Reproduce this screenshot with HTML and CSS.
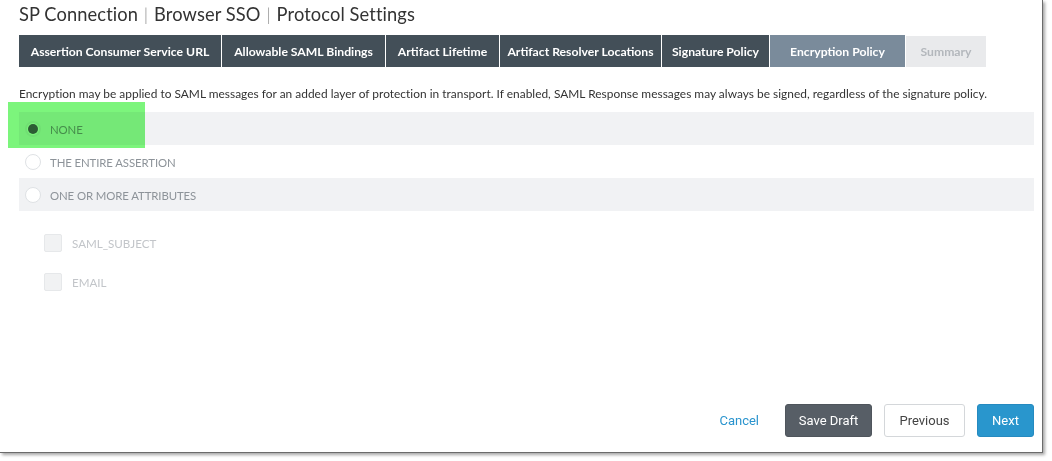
FILE: index.html
```html
<!DOCTYPE html>
<html>
<head>
<meta charset="utf-8">
<link rel="stylesheet" href="styles.css">
</head>
<body>
<div class="frame">
  <h1 class="title">SP Connection <span class="sep">|</span> Browser SSO <span class="sep">|</span> Protocol Settings</h1>
  <nav class="tabs">
    <div class="tab">Assertion Consumer Service URL</div>
    <div class="tab">Allowable SAML Bindings</div>
    <div class="tab">Artifact Lifetime</div>
    <div class="tab">Artifact Resolver Locations</div>
    <div class="tab">Signature Policy</div>
    <div class="tab active">Encryption Policy</div>
    <div class="tab disabled">Summary</div>
  </nav>
  <p class="desc">Encryption may be applied to SAML messages for an added layer of protection in transport. If enabled, SAML Response messages may always be signed, regardless of the signature policy.</p>
  <div class="options">
    <div class="option shaded"><span class="radio checked"></span><span class="opt-label">NONE</span></div>
    <div class="option"><span class="radio"></span><span class="opt-label">THE ENTIRE ASSERTION</span></div>
    <div class="option shaded"><span class="radio"></span><span class="opt-label">ONE OR MORE ATTRIBUTES</span></div>
  </div>
  <div class="checks">
    <div class="check"><span class="box"></span><span class="check-label">SAML_SUBJECT</span></div>
    <div class="check"><span class="box"></span><span class="check-label">EMAIL</span></div>
  </div>
  <div class="footer">
    <a class="cancel">Cancel</a>
    <button class="btn draft">Save Draft</button>
    <button class="btn prev">Previous</button>
    <button class="btn next">Next</button>
  </div>
  <div class="highlight"></div>
</div>
</body>
</html>
```

FILE: styles.css
```css
html, body {
  margin: 0;
  padding: 0;
  background: #ffffff;
}
body {
  width: 1052px;
  height: 461px;
  overflow: hidden;
  font-family: Lato, "Open Sans", sans-serif;
  color: #333;
}
.frame {
  position: relative;
  width: 1043px;
  height: 453px;
  box-sizing: border-box;
  padding: 0 8px 0 19px;
  background: #fff;
  border-right: 1px solid #6b6b6b;
  border-bottom: 1px solid #6b6b6b;
  box-shadow: 2px 2px 3px rgba(0,0,0,0.35);
  display: flex;
  flex-direction: column;
}
.title {
  margin: 3px 0 0 0;
  font-size: 18.3px;
  font-weight: 400;
  line-height: 22px;
  color: #333;
  letter-spacing: 0.1px;
}
.sep {
  color: #888;
  font-weight: 300;
  margin: 0 1px;
}
.tabs {
  margin-top: 10px;
  display: grid;
  grid-template-columns: 202px 163px 113px 161px 107px 135px 80px;
  column-gap: 1px;
  height: 32px;
}
.tab {
  background: #434f58;
  color: #fff;
  font-size: 12.2px;
  font-weight: 700;
  display: flex;
  align-items: center;
  justify-content: center;
  white-space: nowrap;
}
.tab.active {
  background: #7a8b9b;
}
.tab.disabled {
  background: #e9eaec;
  color: #b3b7bc;
  margin-top: 1px;
}
.desc {
  margin: 19px 0 0 0;
  font-size: 11.9px;
  line-height: 16px;
  color: #333;
  white-space: nowrap;
  letter-spacing: 0.02px;
}
.options {
  margin-top: 10px;
  display: flex;
  flex-direction: column;
}
.option {
  height: 33px;
  display: flex;
  align-items: center;
  padding-left: 6px;
}
.option.shaded {
  background: #f1f2f4;
}
.radio {
  width: 16px;
  height: 16px;
  box-sizing: border-box;
  border-radius: 50%;
  border: 1px solid #dfe2e5;
  background: #fff;
  margin-right: 9px;
  display: flex;
  align-items: center;
  justify-content: center;
}
.radio.checked {
  border: 2px solid #e7e9ec;
  background: #fff;
}
.radio.checked::after {
  content: "";
  width: 10px;
  height: 10px;
  border-radius: 50%;
  background: #59606a;
}
.opt-label {
  font-size: 11.4px;
  color: #8d9399;
  letter-spacing: -0.1px;
  padding-top: 1px;
}
.checks {
  margin-top: 23px;
  padding-left: 25px;
  display: flex;
  flex-direction: column;
  row-gap: 21px;
}
.check {
  display: flex;
  align-items: center;
  height: 18px;
}
.box {
  width: 18px;
  height: 18px;
  box-sizing: border-box;
  border: 1px solid #e6e8ea;
  background: #f1f2f3;
  border-radius: 2px;
  margin-right: 10px;
}
.check-label {
  font-size: 11.6px;
  color: #c2c5c9;
}
.footer {
  margin-top: auto;
  margin-bottom: 15px;
  display: flex;
  align-items: center;
  justify-content: flex-end;
  gap: 12px;
  font-family: Roboto, "Liberation Sans", sans-serif;
}
.cancel {
  color: #2a94ce;
  font-size: 13px;
  margin-right: 14px;
  cursor: pointer;
}
.btn {
  height: 33px;
  box-sizing: border-box;
  border-radius: 3px;
  font-family: Roboto, "Liberation Sans", sans-serif;
  font-size: 13px;
  padding: 0;
  border: 1px solid transparent;
}
.btn.draft {
  width: 87px;
  background: #575e66;
  color: #fff;
  border-color: #4f555c;
}
.btn.prev {
  width: 81px;
  background: #fff;
  color: #444;
  border-color: #d4d7da;
}
.btn.next {
  width: 57px;
  background: #2996cd;
  color: #fff;
  border-color: #258ac0;
}
.highlight {
  position: absolute;
  left: 8px;
  top: 102px;
  width: 137px;
  height: 46px;
  background: #7cf57c;
  mix-blend-mode: multiply;
}
```
